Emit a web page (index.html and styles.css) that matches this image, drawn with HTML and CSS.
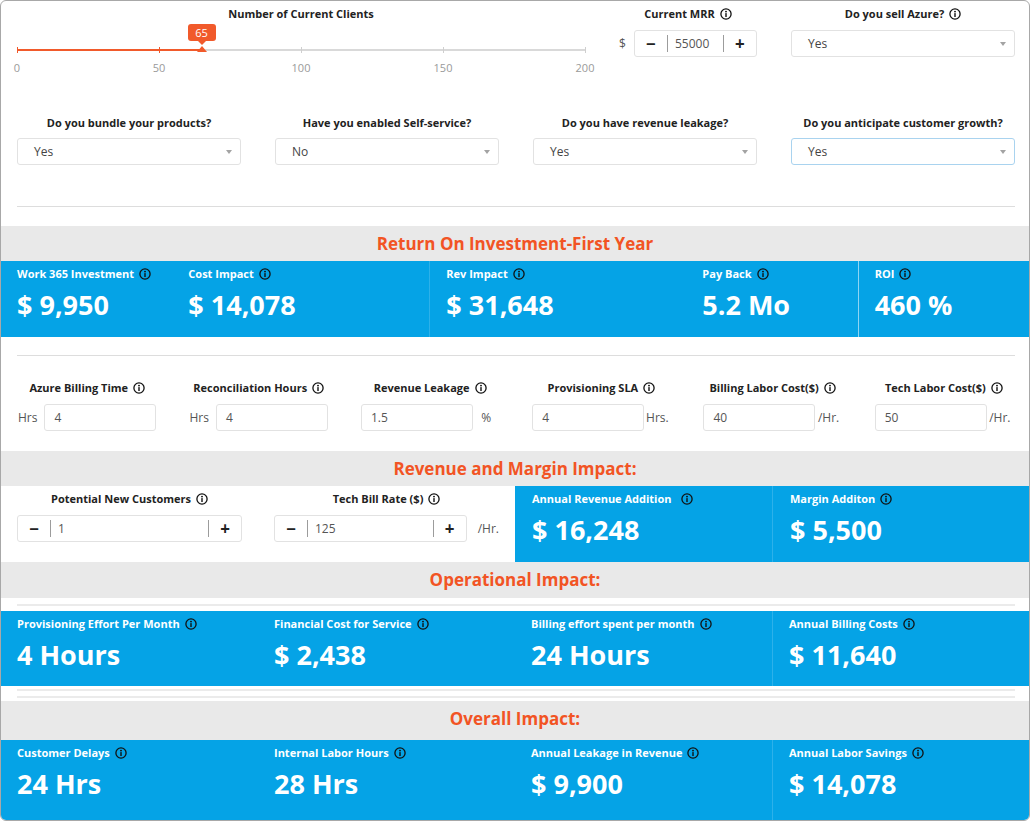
FILE: index.html
```html
<!DOCTYPE html>
<html lang="en">
<head>
<meta charset="utf-8">
<title>ROI Calculator</title>
<link rel="stylesheet" href="styles.css">
</head>
<body>
<svg class="defs" width="0" height="0" aria-hidden="true">
  <symbol id="info" viewBox="0 0 12 12">
    <circle cx="6" cy="6" r="5.1" fill="none" stroke="currentColor" stroke-width="1.3"/>
    <circle cx="6" cy="3.6" r="0.95" fill="currentColor"/>
    <rect x="5.3" y="5.1" width="1.4" height="3.9" fill="currentColor"/>
  </symbol>
</svg>

<div class="frame">
  <section class="setup">
    <div class="row-top">
      <div class="slider-col">
        <div class="lbl">Number of Current Clients</div>
        <div class="slider">
          <div class="track"><div class="fill" style="width:32.5%"></div></div>
          <div class="ticks"><i class="on"></i><i class="on"></i><i></i><i></i><i></i></div>
          <div class="bubble" style="left:32.5%">65</div>
          <div class="thumb" style="left:32.5%"></div>
        </div>
        <div class="tick-labels"><span>0</span><span>50</span><span>100</span><span>150</span><span>200</span></div>
      </div>
      <div class="mrr-col">
        <div class="lbl">Current MRR <svg class="info"><use href="#info"/></svg></div>
        <div class="mrr-row">
          <span class="unit">$</span>
          <div class="stepper mrr">
            <span class="btn">−</span><span class="sep"></span><span class="val">55000</span><span class="sep"></span><span class="btn">+</span>
          </div>
        </div>
      </div>
      <div class="field">
        <div class="lbl">Do you sell Azure? <svg class="info"><use href="#info"/></svg></div>
        <div class="select">Yes<span class="caret"></span></div>
      </div>
    </div>
    <div class="row-q">
      <div class="field">
        <div class="lbl">Do you bundle your products?</div>
        <div class="select">Yes<span class="caret"></span></div>
      </div>
      <div class="field">
        <div class="lbl">Have you enabled Self-service?</div>
        <div class="select">No<span class="caret"></span></div>
      </div>
      <div class="field">
        <div class="lbl">Do you have revenue leakage?</div>
        <div class="select">Yes<span class="caret"></span></div>
      </div>
      <div class="field">
        <div class="lbl">Do you anticipate customer growth?</div>
        <div class="select focus">Yes<span class="caret"></span></div>
      </div>
    </div>
    <div class="rule"></div>
  </section>

  <div class="band b35">Return On Investment-First Year</div>
  <div class="kpis roi">
    <div class="kpi"><div class="k-lbl">Work 365 Investment <svg class="info"><use href="#info"/></svg></div><div class="k-val">$ 9,950</div></div>
    <div class="kpi"><div class="k-lbl">Cost Impact <svg class="info"><use href="#info"/></svg></div><div class="k-val">$ 14,078</div></div>
    <div class="kpi div"><div class="k-lbl">Rev Impact <svg class="info"><use href="#info"/></svg></div><div class="k-val">$ 31,648</div></div>
    <div class="kpi"><div class="k-lbl">Pay Back <svg class="info"><use href="#info"/></svg></div><div class="k-val">5.2 Mo</div></div>
    <div class="kpi div strong"><div class="k-lbl">ROI <svg class="info"><use href="#info"/></svg></div><div class="k-val">460 %</div></div>
  </div>

  <section class="params">
    <div class="rule"></div>
    <div class="param-grid">
      <div class="pcell">
        <div class="lbl">Azure Billing Time <svg class="info"><use href="#info"/></svg></div>
        <div class="prow"><span class="pre">Hrs</span><div class="input">4</div></div>
      </div>
      <div class="pcell">
        <div class="lbl">Reconciliation Hours <svg class="info"><use href="#info"/></svg></div>
        <div class="prow"><span class="pre">Hrs</span><div class="input">4</div></div>
      </div>
      <div class="pcell">
        <div class="lbl">Revenue Leakage <svg class="info"><use href="#info"/></svg></div>
        <div class="prow"><div class="input">1.5</div><span class="suf">%</span></div>
      </div>
      <div class="pcell">
        <div class="lbl">Provisioning SLA <svg class="info"><use href="#info"/></svg></div>
        <div class="prow"><div class="input">4</div><span class="suf">Hrs.</span></div>
      </div>
      <div class="pcell">
        <div class="lbl">Billing Labor Cost($) <svg class="info"><use href="#info"/></svg></div>
        <div class="prow"><div class="input">40</div><span class="suf">/Hr.</span></div>
      </div>
      <div class="pcell">
        <div class="lbl">Tech Labor Cost($) <svg class="info"><use href="#info"/></svg></div>
        <div class="prow"><div class="input">50</div><span class="suf">/Hr.</span></div>
      </div>
    </div>
  </section>

  <div class="band b35">Revenue and Margin Impact:</div>
  <div class="rev">
    <div class="rev-inputs">
      <div class="rcell">
        <div class="lbl">Potential New Customers <svg class="info"><use href="#info"/></svg></div>
        <div class="stepper">
          <span class="btn">−</span><span class="sep"></span><span class="val">1</span><span class="sep"></span><span class="btn">+</span>
        </div>
      </div>
      <div class="rcell">
        <div class="lbl">Tech Bill Rate ($) <svg class="info"><use href="#info"/></svg></div>
        <div class="rrow">
          <div class="stepper">
            <span class="btn">−</span><span class="sep"></span><span class="val">125</span><span class="sep"></span><span class="btn">+</span>
          </div>
          <span class="suf2">/Hr.</span>
        </div>
      </div>
    </div>
    <div class="kpis two">
      <div class="kpi"><div class="k-lbl">Annual Revenue Addition <svg class="info wide"><use href="#info"/></svg></div><div class="k-val">$ 16,248</div></div>
      <div class="kpi div"><div class="k-lbl">Margin Additon <svg class="info"><use href="#info"/></svg></div><div class="k-val">$ 5,500</div></div>
    </div>
  </div>

  <div class="band b36">Operational Impact:</div>
  <div class="strip s-top"><div class="line"></div></div>
  <div class="kpis four h75">
    <div class="kpi"><div class="k-lbl">Provisioning Effort Per Month <svg class="info"><use href="#info"/></svg></div><div class="k-val">4 Hours</div></div>
    <div class="kpi"><div class="k-lbl">Financial Cost for Service <svg class="info"><use href="#info"/></svg></div><div class="k-val">$ 2,438</div></div>
    <div class="kpi"><div class="k-lbl">Billing effort spent per month <svg class="info"><use href="#info"/></svg></div><div class="k-val">24 Hours</div></div>
    <div class="kpi div"><div class="k-lbl">Annual Billing Costs <svg class="info"><use href="#info"/></svg></div><div class="k-val">$ 11,640</div></div>
  </div>
  <div class="strip s-bot"><div class="line"></div><div class="line"></div></div>

  <div class="band b39">Overall Impact:</div>
  <div class="kpis four h80">
    <div class="kpi"><div class="k-lbl">Customer Delays <svg class="info"><use href="#info"/></svg></div><div class="k-val">24 Hrs</div></div>
    <div class="kpi"><div class="k-lbl">Internal Labor Hours <svg class="info"><use href="#info"/></svg></div><div class="k-val">28 Hrs</div></div>
    <div class="kpi"><div class="k-lbl">Annual Leakage in Revenue <svg class="info"><use href="#info"/></svg></div><div class="k-val">$ 9,900</div></div>
    <div class="kpi div"><div class="k-lbl">Annual Labor Savings <svg class="info"><use href="#info"/></svg></div><div class="k-val">$ 14,078</div></div>
  </div>
</div>
</body>
</html>
```

FILE: styles.css
```css
* { box-sizing: border-box; }

body {
  margin: 0;
  background: #fff;
  font-family: "Open Sans", "Liberation Sans", sans-serif;
  color: #222;
}

.defs { position: absolute; width: 0; height: 0; overflow: hidden; }

.frame {
  width: 1030px;
  height: 821px;
  border: 1px solid #a8a8a8;
  border-radius: 6px;
  overflow: hidden;
  display: flex;
  flex-direction: column;
}

/* generic label */
.lbl {
  font-size: 11px;
  line-height: 16px;
  font-weight: 700;
  color: #222;
  text-align: center;
  white-space: nowrap;
  display: flex;
  justify-content: center;
  align-items: center;
  gap: 5px;
}

.info {
  width: 12px;
  height: 12px;
  color: #111;
  flex: none;
}

/* ---------- setup ---------- */
.setup {
  height: 225px;
  flex: none;
  padding: 0 14px 0 16px;
}

.row-top {
  height: 109px;
  padding-top: 5px;
  display: grid;
  grid-template-columns: 568px 1fr 224px;
}

.slider {
  position: relative;
  height: 39px;
}

.track {
  position: absolute;
  left: 0;
  right: 0;
  top: 27px;
  height: 2px;
  background: #d9d9d9;
}
.fill { height: 100%; background: #f15a2b; }

.ticks {
  position: absolute;
  left: 0;
  right: -1px;
  top: 25px;
  height: 6px;
  display: flex;
  justify-content: space-between;
}
.ticks i { display: block; width: 1px; height: 6px; background: #cfcfcf; }
.ticks i.on { background: #f15a2b; }

.bubble {
  position: absolute;
  top: 2px;
  width: 28px;
  height: 17px;
  margin-left: -14px;
  background: #f15a2b;
  border-radius: 3px;
  color: #fff;
  font-size: 11px;
  line-height: 17px;
  text-align: center;
}
.bubble::after {
  content: "";
  position: absolute;
  left: 10px;
  top: 17px;
  border-left: 4px solid transparent;
  border-right: 4px solid transparent;
  border-top: 4px solid #f15a2b;
}

.thumb {
  position: absolute;
  top: 24px;
  margin-left: -5px;
  width: 0;
  height: 0;
  border-left: 5px solid transparent;
  border-right: 5px solid transparent;
  border-bottom: 6px solid #f15a2b;
}

.tick-labels {
  display: flex;
  justify-content: space-between;
  height: 14px;
}
.tick-labels span {
  width: 0;
  display: flex;
  justify-content: center;
  font-size: 11px;
  line-height: 14px;
  color: #9a9a9a;
}

.mrr-col .lbl { margin-bottom: 8px; }
.mrr-row {
  display: flex;
  justify-content: center;
  align-items: center;
  gap: 8px;
}
.unit { font-size: 12px; color: #555; }

.stepper {
  display: flex;
  align-items: center;
  height: 27px;
  border: 1px solid #e2e2e2;
  border-radius: 3px;
  background: #fff;
}
.stepper.mrr { width: 123px; }
.stepper .btn {
  width: 32px;
  flex: none;
  text-align: center;
  font-size: 17px;
  font-weight: 700;
  line-height: 25px;
  color: #222;
}
.stepper .sep {
  width: 1px;
  height: 17px;
  background: #9c9c9c;
  flex: none;
}
.stepper .val {
  flex: 1;
  padding-left: 7px;
  font-size: 12px;
  color: #555;
}

.field .lbl { margin-bottom: 7px; }
.row-top .field .lbl { margin-bottom: 8px; }

.select {
  position: relative;
  height: 27px;
  border: 1px solid #e2e2e2;
  border-radius: 3px;
  padding-left: 16px;
  font-size: 12px;
  line-height: 25px;
  color: #444;
  background: #fff;
}
.select.focus { border-color: #a9d3ef; }
.caret {
  position: absolute;
  right: 8px;
  top: 11px;
  border-left: 3.5px solid transparent;
  border-right: 3.5px solid transparent;
  border-top: 4px solid #a3a3a3;
}

.row-q {
  padding-top: 5px;
  display: grid;
  grid-template-columns: repeat(4, 1fr);
  column-gap: 34px;
}

.rule {
  height: 1px;
  background: #dddddd;
}
.setup .rule { margin-top: 41px; }

/* ---------- bands ---------- */
.band {
  flex: none;
  background: #e9e9e9;
  text-align: center;
  color: #f25424;
  font-weight: 700;
  font-size: 17px;
}
.b35 { height: 35px; line-height: 35px; }
.b36 { height: 36px; line-height: 36px; }
.b39 { height: 39px; line-height: 36px; }

/* ---------- KPI blue ---------- */
.kpis {
  flex: none;
  display: grid;
  background: #05a3e6;
  color: #fff;
}
.kpis.roi { height: 76px; grid-template-columns: 2fr 3fr 3fr 2fr 2fr; }
.kpis.two { grid-template-columns: 1fr 1fr; }
.kpis.four { grid-template-columns: repeat(4, 1fr); }
.h75 { height: 75px; }
.h80 { height: 80px; }

.kpi {
  padding: 5px 8px 0 16px;
}
.kpi.div { border-left: 1px solid rgba(255, 255, 255, 0.16); padding-left: 16px; }
.kpi.div.strong { border-left-color: rgba(255, 255, 255, 0.55); }
.two .kpi { padding-left: 17px; }

.k-lbl {
  font-size: 11px;
  line-height: 16px;
  font-weight: 700;
  white-space: nowrap;
  display: flex;
  align-items: center;
  gap: 5px;
}
.info.wide { margin-left: 4px; }

.k-val {
  margin-top: 6px;
  font-size: 27px;
  line-height: 34px;
  font-weight: 700;
  white-space: nowrap;
}

/* ---------- params ---------- */
.params {
  height: 114px;
  flex: none;
  padding: 18px 14px 0 16px;
}
.params .rule { margin-bottom: 24px; }

.param-grid {
  display: grid;
  grid-template-columns: repeat(6, 1fr);
  margin: 0 -14px 0 -16px;
}
.pcell { padding: 0 16px 0 17px; }
.pcell .lbl { margin-bottom: 8px; }
.prow { display: flex; align-items: center; }
.pre { font-size: 12px; color: #555; margin-right: 7px; }
.suf { flex: 1; text-align: center; font-size: 12px; color: #555; }
.input {
  width: 112px;
  flex: none;
  height: 27px;
  border: 1px solid #e2e2e2;
  border-radius: 3px;
  padding-left: 9px;
  font-size: 12px;
  line-height: 25px;
  color: #555;
}

/* ---------- revenue ---------- */
.rev {
  flex: none;
  height: 76px;
  display: grid;
  grid-template-columns: 1fr 1fr;
}
.rev-inputs {
  display: grid;
  grid-template-columns: 1fr 1fr;
}
.rcell { padding: 5px 16px 0 16px; }
.rcell .lbl { margin-bottom: 8px; }
.rrow { display: flex; align-items: center; }
.rrow .stepper { flex: 1; }
.suf2 { margin-left: 11px; font-size: 12px; color: #555; }

/* ---------- strips ---------- */
.strip {
  flex: none;
  padding: 0 14px 0 16px;
}
.s-top { height: 13px; padding-top: 6px; }
.s-bot { height: 15px; padding-top: 3px; }
.strip .line { height: 2px; background: #ebebeb; }
.s-bot .line + .line { margin-top: 5px; }
```
